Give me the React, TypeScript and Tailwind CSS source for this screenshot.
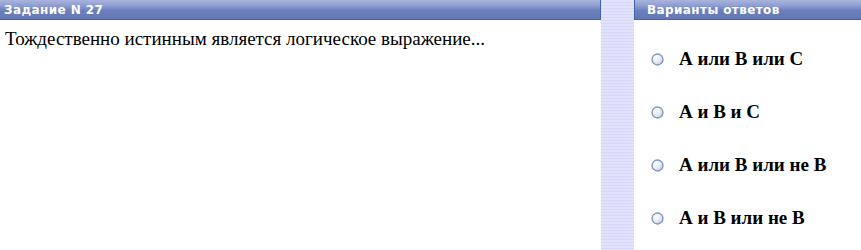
const options = ['А или В или С', 'А и В и С', 'А или В или не В', 'А и В или не В'];

const Radio = () => (
  <svg width="13" height="13" viewBox="0 0 13 13" className="shrink-0">
    <defs>
      <radialGradient id="rg" cx="0.35" cy="0.3" r="0.8">
        <stop offset="0" stopColor="#ffffff" />
        <stop offset="0.6" stopColor="#e4e8f0" />
        <stop offset="1" stopColor="#b8c4d8" />
      </radialGradient>
    </defs>
    <circle cx="6.5" cy="6.5" r="5.5" fill="url(#rg)" stroke="#7c95c0" strokeWidth="1.3" />
  </svg>
);

const Header = ({ title, className }: { title: string; className: string }) => (
  <div
    className={`h-[20px] border-b border-[#3c66a6] bg-[linear-gradient(to_bottom,#aab4de_0%,#8e9dd0_30%,#6b7fbd_55%,#6578b6_100%)] ${className}`}
  >
    <span className="block pt-[2px] text-[12px] font-bold leading-[16px] text-white [font-family:'DejaVu_Sans',sans-serif] [letter-spacing:0.4px]">
      {title}
    </span>
  </div>
);

export default function App() {
  return (
    <div className="flex h-[250px] w-[861px] bg-white">
      <div className="w-[601px] shrink-0">
        <Header title="Задание N 27" className="border-r pl-[4px]" />
        <p className="pl-[5px] pt-[8px] text-[19px] leading-[22px] text-black [font-family:'Liberation_Serif',serif]">
          Тождественно истинным является логическое выражение...
        </p>
      </div>
      <div className="w-[33px] shrink-0 bg-[repeating-linear-gradient(to_bottom,#e2e2fc_0px,#e2e2fc_2px,#d6d6f8_2px,#d6d6f8_3px)]" />
      <div className="flex-1">
        <Header title="Варианты ответов" className="border-l border-l-[#3c66a6] pl-[12px]" />
        <div className="flex flex-col gap-[31px] pl-[17px] pt-[28px]">
          {options.map((o) => (
            <div key={o} className="flex h-[22px] items-center gap-[15px]">
              <Radio />
              <span className="text-[19px] font-bold leading-[22px] text-black [font-family:'Liberation_Serif',serif]">
                {o}
              </span>
            </div>
          ))}
        </div>
      </div>
    </div>
  );
}
